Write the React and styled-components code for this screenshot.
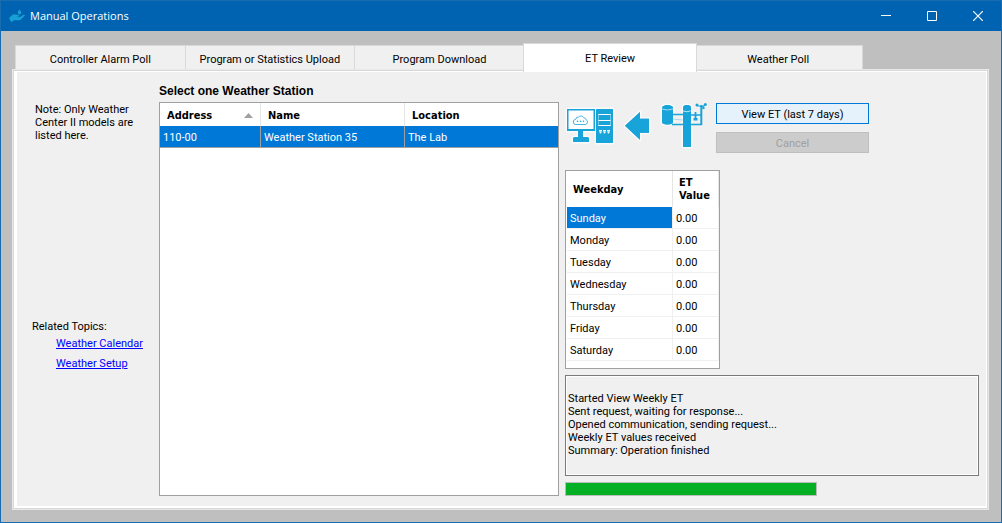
import React from "react";
import styled, { createGlobalStyle, css } from "styled-components";

const GlobalStyle = createGlobalStyle`
  *, *::before, *::after { box-sizing: border-box; }
  body {
    margin: 0;
    font: 11px/13px Roboto, "Liberation Sans", Arial, sans-serif;
    color: #000;
  }
`;

const Window = styled.div`
  display: flex;
  flex-direction: column;
  min-height: 100vh;
  background: #bfbfbf;
  border: 1px solid #1a6cb0;
`;

const TitleBar = styled.header`
  display: flex;
  align-items: center;
  height: 30px;
  padding-left: 7px;
  background: #0063b1;
  color: #fff;
`;

const Title = styled.h1`
  flex: 1;
  margin: 0 0 0 4px;
  font: 11px/16px "Open Sans", "Noto Sans", sans-serif;
`;

const CaptionButton = styled.button`
  display: grid;
  place-items: center;
  width: 46px;
  height: 30px;
  padding: 0;
  border: 0;
  background: none;
  color: #fff;
`;

const Main = styled.main`
  flex: 1;
  display: flex;
  flex-direction: column;
  padding: 14px 12px 12px;
`;

const Tabs = styled.nav`
  display: grid;
  grid-template-columns: repeat(5, 1fr);
  max-width: 848px;
  height: 25px;
  margin-left: 2px;
`;

const Tab = styled.button`
  padding: 2px 0 0;
  border: 1px solid #d9d9d9;
  border-width: 1px 0 0 1px;
  background: #f0f0f0;
  font: inherit;
  color: #000;

  &:last-child { border-right-width: 1px; }

  ${({ $active }) => $active && css`
    z-index: 1;
    margin: -2px -4px -2px -1px;
    padding: 0;
    border-right-width: 1px;
    background: #fff;
  `}
`;

const Panel = styled.section`
  flex: 1;
  display: grid;
  grid-template-columns: 135px 400px minmax(0, 1fr);
  column-gap: 6px;
  padding: 13px 8px 12px 4px;
  border: 1px solid #d9d9d9;
  outline: 1px solid #e8e8e8;
  outline-offset: 0;
  margin-right: 1px;
  margin-bottom: 1px;
  background: #f0f0f0;
  box-shadow: inset 3px 0 #fff, inset -1px -2px #fff, inset 0 1px #fff;
`;

const Sidebar = styled.aside`
  display: flex;
  flex-direction: column;
  padding: 19px 14px 0 14px;
`;

const Note = styled.p`
  margin: 0 0 0 3px;
`;

const Related = styled.div`
  margin-top: 178px;

  h2 { margin: 0; font: inherit; }
  ul { margin: 4px 0 0 24px; padding: 0; list-style: none; }
  li { margin-bottom: 7px; white-space: nowrap; }
  a { color: #0000ff; }
`;

const Stations = styled.div`
  display: flex;
  flex-direction: column;
`;

const StationsLabel = styled.h2`
  margin: 1px 0 4px;
  font: bold 12px/13px "Liberation Sans", Arial, sans-serif;
`;

const GridBox = styled.div`
  flex: 1;
  border: 1px solid #a0a0a0;
  background: #fff;
`;

const DataTable = styled.table`
  width: 100%;
  border-collapse: separate;
  border-spacing: 0;
  table-layout: fixed;

  th {
    border-right: 1px solid #e5e5e5;
    padding: 0 7px;
    text-align: left;
    font: bold 11px/13px "DejaVu Sans Condensed", "Open Sans", sans-serif;
  }
  td { height: 22px; padding: 1px 3px 0; }
`;

const StationTable = styled(DataTable)`
  th { height: 23px; padding: 1px 7px 0; }
  th:last-child { border-right: 0; }
  td {
    border-right: 1px solid #a0a0a0;
    border-bottom: 1px solid #a0a0a0;
    background: #0078d7;
    color: #fff;
  }
  td:last-child { border-right: 0; }
`;

const SortHead = styled.span`
  display: flex;
  align-items: center;
  justify-content: space-between;
`;

const Side = styled.div`
  display: flex;
  flex-direction: column;
  padding-top: 19px;
`;

const Actions = styled.div`
  display: flex;
  height: 67px;
`;

const Diagram = styled.svg`
  flex: none;
  width: 151px;
  height: 50px;
  margin-top: -3px;
`;

const Buttons = styled.div`
  display: flex;
  flex-direction: column;
  gap: 8px;
  width: 153px;
`;

const ActionButton = styled.button`
  height: 21px;
  padding: 1px 0 0;
  border: 1px solid #0078d7;
  background: #e5f1fb;
  font: inherit;
  color: #000;

  &:disabled {
    border-color: #bfbfbf;
    background: #cccccc;
    color: #a0a0a0;
  }
`;

const WeekBox = styled(GridBox)`
  flex: none;
  width: 155px;
  padding: 0 0 7px 1px;
`;

const WeekTable = styled(DataTable)`
  th { height: 36px; padding: 0 6px; }
  th:first-child { width: 106px; }
  td {
    border-right: 1px solid #f0f0f0;
    border-bottom: 1px solid #f0f0f0;
  }
`;

const DayCell = styled.td`
  ${({ $selected }) => $selected && css`
    background: #0078d7;
    color: #fff;
  `}
`;

const Log = styled.div`
  height: 101px;
  margin-top: 6px;
  padding: 16px 2px;
  border: 1px solid #7a7a7a;
  box-shadow: inset -1px -1px #fff, inset 1px 1px #fff;

  p { margin: 0; }
`;

const Progress = styled.progress`
  appearance: none;
  width: 252px;
  height: 14px;
  margin-top: 6px;
  border: 1px solid #bcbcbc;

  &::-webkit-progress-bar { background: #e6e6e6; }
  &::-webkit-progress-value { background: #06b025; }
`;

const TABS = [
  "Controller Alarm Poll",
  "Program or Statistics Upload",
  "Program Download",
  "ET Review",
  "Weather Poll",
];
const DAYS = ["Sunday", "Monday", "Tuesday", "Wednesday", "Thursday", "Friday", "Saturday"];
const MESSAGES = [
  "Started View Weekly ET",
  "Sent request, waiting for response...",
  "Opened communication, sending request...",
  "Weekly ET values received",
  "Summary: Operation finished",
];

function AppIcon() {
  return (
    <svg width="18" height="16" viewBox="0 0 18 16" fill="#18a0d4" aria-hidden="true">
      <path d="M11.5 1.5 C12.6 3 13.2 3.8 13.2 4.7 A1.7 1.7 0 0 1 9.8 4.7 C9.8 3.8 10.4 3 11.5 1.5Z" />
      <path d="M1 10 L4.5 6.8 Q5.5 6 7 6.4 L10.6 7 Q11.6 7.4 10.8 8.4 L8 8.8 L11.5 9.2 L15.5 6.8 Q17.4 6.4 16.8 7.8 L12.6 11.8 Q12 12.3 11 12.3 L6 12.3 L3.3 14.2Z" />
    </svg>
  );
}

function TransferDiagram() {
  return (
    <Diagram viewBox="0 0 151 50" fill="#18a4d8" role="img" aria-label="Weather station to computer">
      <g stroke="#fff" strokeOpacity=".7" strokeWidth="3" strokeLinejoin="round" paintOrder="stroke">
        <path d="M2 9h28v22H2z" />
        <rect x="31" y="9" width="17" height="34" rx="1" />
        <path d="M8 42v-3q0-2 2-2h3v-6h5v6h4q2 0 2 2v3z" />
        <path d="M60 25.700 75 12v6.700h9v14h-9v7z" />
        <path d="M97 7q5.500-4 11 0v16q-5.500 3-11 0z" />
        <path d="M118 8q0-3 4-3t4 3v39h-8z" />
      </g>
      <path d="M2 9h28v22H2z" />
      <path d="M3.500 10.500h25v18.500h-25z" fill="#fff" />
      <path d="M8 42v-3q0-2 2-2h3v-6h5v6h4q2 0 2 2v3z" />
      <path d="M11 24.500a2.600 2.600 0 0 1-.3-5.200a2.600 2.600 0 0 1 2.800-2.200a3.200 3.200 0 0 1 5.200.6a2.300 2.300 0 0 1 2.300 2a2.500 2.500 0 0 1-1 4.800z" fill="none" stroke="#18a4d8" strokeWidth=".8" />
      <circle cx="12.500" cy="21.300" r=".8" /><circle cx="15.500" cy="21.300" r=".8" /><circle cx="18.500" cy="21.300" r=".8" />
      <rect x="31" y="9" width="17" height="34" rx="1" />
      <path d="M33.500 14.500h12M33.500 20.500h12M33.500 25.500h12" stroke="#fff" strokeWidth="1" />
      <path d="M33.500 14v12M45.500 14v12" stroke="#fff" strokeWidth=".4" />
      <g fill="#fff">
        <path d="M34 30h3v1.500h-3zM38 30h3v1.500h-3zM42 30h3v1.500h-3z" />
        <circle cx="35.500" cy="32.500" r="1" /><circle cx="39.500" cy="32.500" r="1" /><circle cx="43.500" cy="32.500" r="1" />
      </g>
      <path d="M60 25.700 75 12v6.700h9v14h-9v7z" />
      <g stroke="#18a4d8" fill="none">
        <path d="M107 14.500h11M107 24.500h11M126 15h11M126 24.500h11" strokeWidth="1.400" />
        <path d="M107 19 118 20" strokeWidth=".8" opacity=".4" />
        <path d="M136.300 5v20" strokeWidth="2" />
        <path d="M132 5.500l4 1 4-1M136 6l3 1.500" strokeWidth="1.200" />
        <path d="M130.500 12v8" strokeWidth="1.800" />
      </g>
      <path d="M97 7q5.500-4 11 0v16q-5.500 3-11 0z" />
      <path d="M97 9q5.500 2 11 0" stroke="#fff" strokeWidth=".6" fill="none" />
      <path d="M118 9h7.500v38H118z" />
      <path d="M118 8q0-3 4-3t4 3v2h-8z" />
      <path d="M118 11q4 1.500 7.500 0" stroke="#fff" strokeWidth=".7" fill="none" />
      <path d="M128.500 18h4v2.500h-4z" />
      <circle cx="132" cy="5" r="1.500" /><circle cx="140.300" cy="4.500" r="1.500" /><circle cx="138.500" cy="8" r="1.200" />
    </Diagram>
  );
}

export default function App() {
  return (
    <>
      <GlobalStyle />
      <Window>
        <TitleBar>
          <AppIcon />
          <Title>Manual Operations</Title>
          <CaptionButton aria-label="Minimize">
            <svg width="10" height="10"><path d="M0 4.500h10" stroke="currentColor" /></svg>
          </CaptionButton>
          <CaptionButton aria-label="Maximize">
            <svg width="10" height="10"><path d="M.5.5h9v9h-9z" stroke="currentColor" fill="none" /></svg>
          </CaptionButton>
          <CaptionButton aria-label="Close">
            <svg width="10" height="10"><path d="M0 0l10 10M10 0L0 10" stroke="currentColor" strokeWidth="1.200" /></svg>
          </CaptionButton>
        </TitleBar>
        <Main>
          <Tabs role="tablist">
            {TABS.map((name) => (
              <Tab key={name} role="tab" aria-selected={name === "ET Review"} $active={name === "ET Review"}>
                {name}
              </Tab>
            ))}
          </Tabs>
          <Panel role="tabpanel">
            <Sidebar>
              <Note>Note: Only Weather Center II models are listed here.</Note>
              <Related>
                <h2>Related Topics:</h2>
                <ul>
                  <li><a href="#calendar">Weather Calendar</a></li>
                  <li><a href="#setup">Weather Setup</a></li>
                </ul>
              </Related>
            </Sidebar>
            <Stations>
              <StationsLabel id="stations-label">Select one Weather Station</StationsLabel>
              <GridBox>
                <StationTable aria-labelledby="stations-label">
                  <colgroup><col width="101" /><col width="144" /><col /></colgroup>
                  <thead>
                    <tr>
                      <th aria-sort="ascending">
                        <SortHead>
                          Address
                          <svg width="9" height="5" fill="#a0a0a0" aria-hidden="true"><path d="M0 5 4.500 0 9 5z" /></svg>
                        </SortHead>
                      </th>
                      <th>Name</th>
                      <th>Location</th>
                    </tr>
                  </thead>
                  <tbody>
                    <tr><td>110-00</td><td>Weather Station 35</td><td>The Lab</td></tr>
                  </tbody>
                </StationTable>
              </GridBox>
            </Stations>
            <Side>
              <Actions>
                <TransferDiagram />
                <Buttons>
                  <ActionButton>View ET (last 7 days)</ActionButton>
                  <ActionButton disabled>Cancel</ActionButton>
                </Buttons>
              </Actions>
              <WeekBox>
                <WeekTable aria-label="Weekly ET values">
                  <thead>
                    <tr><th>Weekday</th><th>ET Value</th></tr>
                  </thead>
                  <tbody>
                    {DAYS.map((day, i) => (
                      <tr key={day}>
                        <DayCell $selected={i === 0}>{day}</DayCell>
                        <td>0.00</td>
                      </tr>
                    ))}
                  </tbody>
                </WeekTable>
              </WeekBox>
              <Log role="log">
                {MESSAGES.map((m) => <p key={m}>{m}</p>)}
              </Log>
              <Progress value="100" max="100" aria-label="Operation progress" />
            </Side>
          </Panel>
        </Main>
      </Window>
    </>
  );
}
